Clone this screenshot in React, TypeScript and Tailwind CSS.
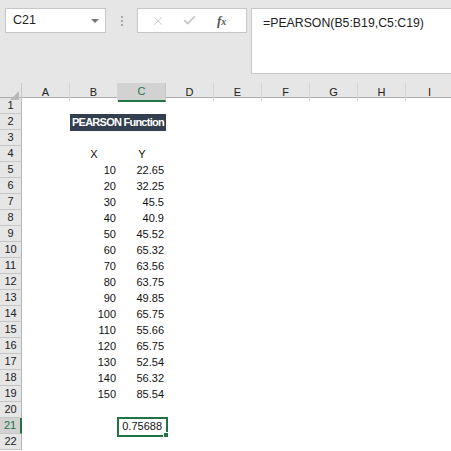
import { X, Check } from "lucide-react"

const cols = ["A", "B", "C", "D", "E", "F", "G", "H", "I"]

const data: [number, string, string][] = [
    [5, "10", "22.65"],
    [6, "20", "32.25"],
    [7, "30", "45.5"],
    [8, "40", "40.9"],
    [9, "50", "45.52"],
    [10, "60", "65.32"],
    [11, "70", "63.56"],
    [12, "80", "63.75"],
    [13, "90", "49.85"],
    [14, "100", "65.75"],
    [15, "110", "55.66"],
    [16, "120", "65.75"],
    [17, "130", "52.54"],
    [18, "140", "56.32"],
    [19, "150", "85.54"],
]

function RowHead({ n, active }: { n: number; active?: boolean }) {
    return (
        <div
            className={
                active
                    ? "h-[16px] flex items-center justify-center bg-[#d2d2d2] text-[#217346] border-b border-[#c6c6c6] border-r-2 border-r-[#217346]"
                    : "h-[16px] flex items-center justify-center bg-[#e6e6e6] text-[#222] border-b border-[#c6c6c6] border-r border-r-[#b4b4b4]"
            }
        >
            {n}
        </div>
    )
}

function Row({ n, children }: { n: number; children?: React.ReactNode }) {
    return (
        <div className="grid grid-cols-[22px_48px_48px_48px_48px_48px_48px_48px_48px_48px] h-[16px]">
            <RowHead n={n} active={n === 21} />
            {children}
        </div>
    )
}

export default function App() {
    return (
        <div className="w-[451px] h-[451px] overflow-hidden bg-white text-[11px] font-['Liberation_Sans',Arial,sans-serif]">
            {/* formula bar area */}
            <div className="h-[83px] bg-[#e6e6e6] flex items-start pt-[8px] pl-[5px]">
                <div className="w-[101px] h-[25px] bg-white border border-[#c6c6c6] flex items-center justify-between pl-[7px] pr-[6px] text-[12.5px] text-[#222]">
                    <span>C21</span>
                    <span className="w-0 h-0 border-l-[4px] border-r-[4px] border-t-[4px] border-l-transparent border-r-transparent border-t-[#777]" />
                </div>
                <div className="w-[31px] h-[25px] flex flex-col items-center justify-center gap-[2px]">
                    <span className="w-[2px] h-[2px] bg-[#aaa]" />
                    <span className="w-[2px] h-[2px] bg-[#aaa]" />
                    <span className="w-[2px] h-[2px] bg-[#aaa]" />
                </div>
                <div className="w-[110px] h-[25px] bg-white border border-[#c6c6c6] flex items-center pl-[13px] gap-[17px]">
                    <X size={14} strokeWidth={1.5} className="text-[#c2c2c2]" />
                    <Check size={15} strokeWidth={2.5} className="text-[#c2c2c2]" />
                    <span className="ml-[3px] text-[13px] italic font-bold text-[#555] font-['Liberation_Serif',serif]">
                        f<span className="text-[10px]">x</span>
                    </span>
                </div>
                <div className="ml-[4px] flex-1 h-[66px] bg-white border border-[#c6c6c6] border-r-0 pl-[11px] pt-[5px] text-[12.3px] text-[#222]">
                    =PEARSON(B5:B19,C5:C19)
                </div>
            </div>

            {/* column headers */}
            <div className="grid grid-cols-[22px_48px_48px_48px_48px_48px_48px_48px_48px_48px] h-[15px] bg-[#e6e6e6] border-b border-[#ababab]">
                <div className="relative border-r border-[#c6c6c6]">
                    <svg className="absolute right-[2px] bottom-[1px]" width="9" height="9" viewBox="0 0 9 9">
                        <polygon points="9,0 9,9 0,9" fill="#b8b8b8" />
                    </svg>
                </div>
                {cols.map((c) => (
                    <div
                        key={c}
                        className={
                            c === "C"
                                ? "flex items-center justify-center bg-[#d2d2d2] text-[#217346] border-r border-[#c6c6c6] border-b-2 border-b-[#217346] -mb-[1px]"
                                : "flex items-center justify-center text-[#222] border-r border-[#d4d4d4]"
                        }
                    >
                        {c}
                    </div>
                ))}
            </div>

            <div className="text-[#111]">
                <Row n={1} />
                <Row n={2}>
                    <div />
                    <div className="col-span-2 h-[17px] bg-[#333f4f] text-white font-bold text-[11px] whitespace-nowrap overflow-hidden flex items-center pl-[2px] tracking-[-0.75px]">
                        PEARSON Function
                    </div>
                </Row>
                <Row n={3} />
                <Row n={4}>
                    <div />
                    <div className="flex items-center justify-center">X</div>
                    <div className="flex items-center justify-center">Y</div>
                </Row>
                {data.map(([n, x, y]) => (
                    <Row key={n} n={n}>
                        <div />
                        <div className="flex items-center justify-end pr-[2px]">{x}</div>
                        <div className="flex items-center justify-end pr-[2px]">{y}</div>
                    </Row>
                ))}
                <Row n={20} />
                <Row n={21}>
                    <div />
                    <div />
                    <div className="relative flex items-center justify-end pr-[4px]">
                        0.75688
                        <span className="absolute -left-[1px] -top-[1px] -right-[2px] -bottom-[2px] border-2 border-[#217346]" />
                        <span className="absolute -right-[3px] -bottom-[3px] w-[6px] h-[6px] bg-[#217346] border border-white" />
                    </div>
                </Row>
                <Row n={22} />
            </div>
        </div>
    )
}
